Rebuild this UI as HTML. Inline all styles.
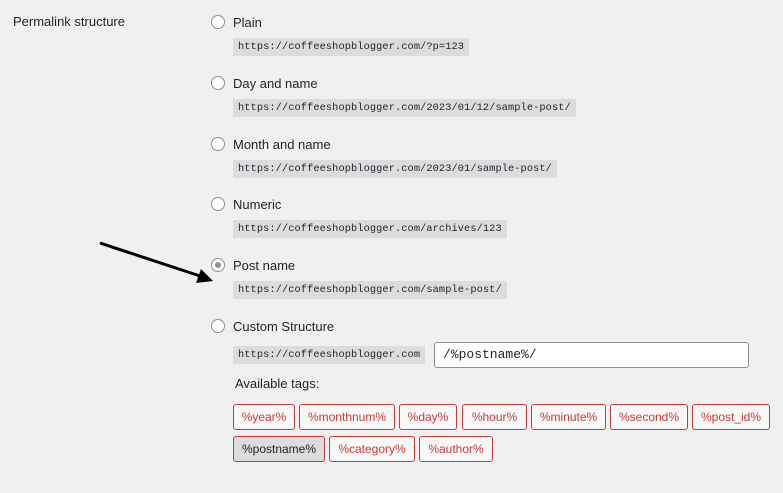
<!DOCTYPE html>
<html><head><style>
body{margin:0;width:783px;height:493px;background:#f0f0f1;font-family:"Liberation Sans",sans-serif;color:#1d2327;position:relative;overflow:hidden}
.a{position:absolute}
.lbl{font-size:13px;line-height:16px}
.r{width:14px;height:14px;border:1px solid #8c8f94;border-radius:50%;background:#fff;box-sizing:border-box}
.code{font-family:"Liberation Mono",monospace;font-size:10.3px;background:#dcdcde;padding:0 5px;height:18px;line-height:18px;letter-spacing:0.1px}
.t{position:absolute;height:26px;box-sizing:border-box;border:1px solid #d63638;border-radius:3px;background:#f6f7f7;color:#d63638;font-size:12px;line-height:24px;text-align:center}
</style></head><body>
<div class="a lbl" style="left:13px;top:14px">Permalink structure</div>

<div class="a r" style="left:211px;top:15px"></div><div class="a lbl" style="left:233px;top:15px">Plain</div>
<div class="a code" style="left:233px;top:38px">https://coffeeshopblogger.com/?p=123</div>

<div class="a r" style="left:211px;top:76px"></div><div class="a lbl" style="left:233px;top:76px">Day and name</div>
<div class="a code" style="left:233px;top:99px">https://coffeeshopblogger.com/2023/01/12/sample-post/</div>

<div class="a r" style="left:211px;top:137px"></div><div class="a lbl" style="left:233px;top:137px">Month and name</div>
<div class="a code" style="left:233px;top:160px">https://coffeeshopblogger.com/2023/01/sample-post/</div>

<div class="a r" style="left:211px;top:197px"></div><div class="a lbl" style="left:233px;top:197px">Numeric</div>
<div class="a code" style="left:233px;top:220px">https://coffeeshopblogger.com/archives/123</div>

<div class="a r" style="left:211px;top:258px"><div style="position:absolute;left:3px;top:3px;width:6px;height:6px;border-radius:50%;background:#8c8f94"></div></div><div class="a lbl" style="left:233px;top:258px">Post name</div>
<div class="a code" style="left:233px;top:281px">https://coffeeshopblogger.com/sample-post/</div>

<div class="a r" style="left:211px;top:319px"></div><div class="a lbl" style="left:233px;top:319px">Custom Structure</div>
<div class="a code" style="left:233px;top:346px">https://coffeeshopblogger.com</div>
<div class="a" style="left:434px;top:342px;width:315px;height:26px;box-sizing:border-box;border:1px solid #8c8f94;border-radius:3px;background:#fff;font-family:'Liberation Mono',monospace;font-size:13px;line-height:24px;padding-left:8px">/%postname%/</div>

<div class="a lbl" style="left:235px;top:376px">Available tags:</div>

<div class="t" style="left:233px;top:404px;width:62px">%year%</div>
<div class="t" style="left:299px;top:404px;width:96px">%monthnum%</div>
<div class="t" style="left:399px;top:404px;width:58px">%day%</div>
<div class="t" style="left:462px;top:404px;width:65px">%hour%</div>
<div class="t" style="left:531px;top:404px;width:75px">%minute%</div>
<div class="t" style="left:610px;top:404px;width:78px">%second%</div>
<div class="t" style="left:692px;top:404px;width:78px">%post_id%</div>
<div class="t" style="left:233px;top:436px;width:92px;background:#dcdcde;color:#1d2327">%postname%</div>
<div class="t" style="left:329px;top:436px;width:86px">%category%</div>
<div class="t" style="left:419px;top:436px;width:74px">%author%</div>

<svg class="a" style="left:0;top:0" width="783" height="493">
<line x1="100" y1="243" x2="200" y2="276" stroke="#000" stroke-width="3"/>
<polygon points="213,281 196,283 201,269" fill="#000"/>
</svg>
</body></html>
